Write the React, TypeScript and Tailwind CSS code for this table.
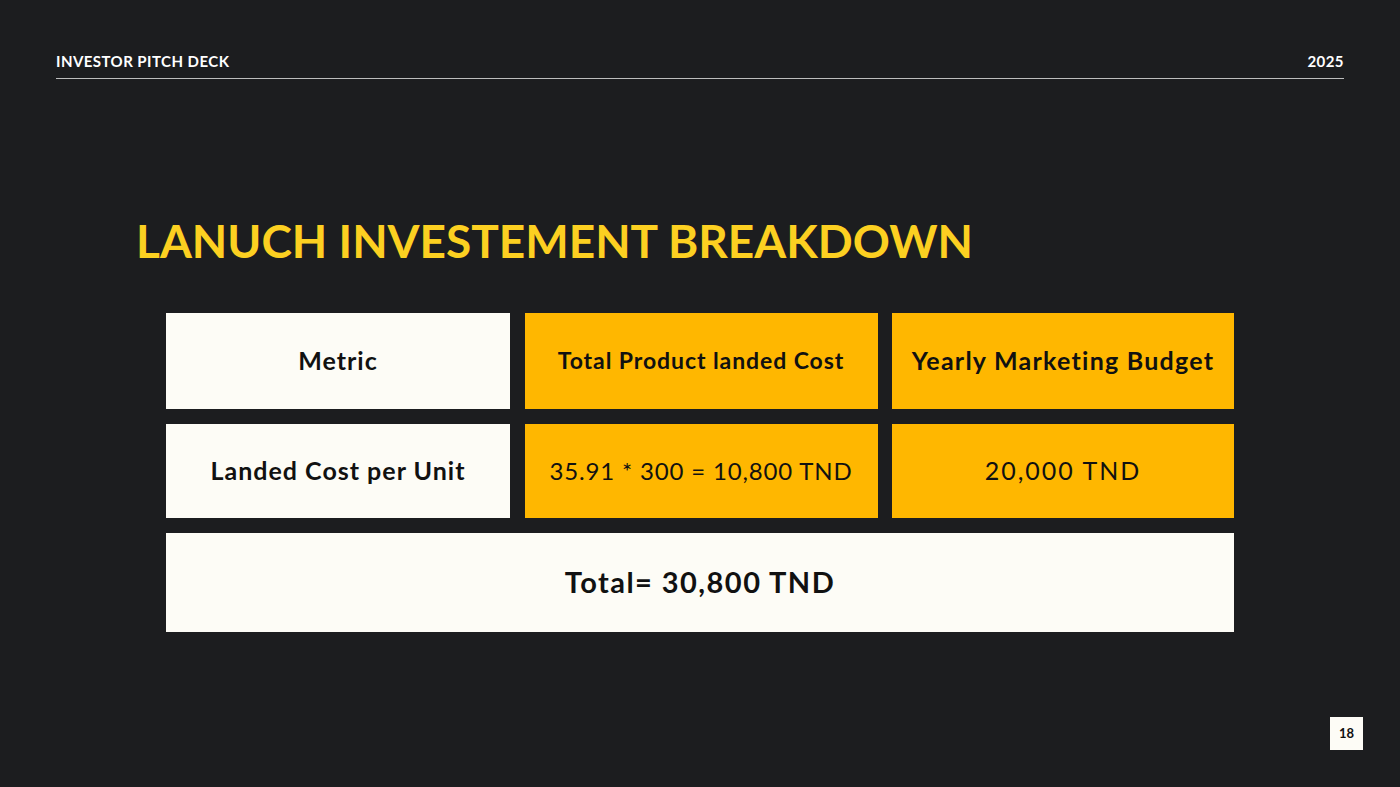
const cell = "flex items-center justify-center text-[#111111]";

export default function App() {
  return (
    <div className="w-[1400px] h-[787px] bg-[#1c1d1f] font-['Lato','Open_Sans',sans-serif] flex flex-col px-[56px] pt-[50px] overflow-hidden">
      <header className="flex items-end justify-between border-b border-[#bdbdbd] pb-[5px] text-white text-[15px] font-bold tracking-[0.03em]">
        <span>INVESTOR PITCH DECK</span>
        <span>2025</span>
      </header>

      <h1 className="mt-[139px] ml-[80px] text-[#fcd021] text-[46px] font-bold leading-none">
        LANUCH INVESTEMENT BREAKDOWN
      </h1>

      <div className="mt-[49px] ml-[110px] w-[1068px] grid grid-cols-[344px_353px_342px] gap-x-[14.5px] gap-y-[15px]">
        <div className={`${cell} h-[96px] bg-[#fdfcf6] text-[25px] font-bold tracking-[0.04em]`}>Metric</div>
        <div className={`${cell} h-[96px] bg-[#ffb700] text-[23px] font-bold tracking-[0.04em]`}>Total Product landed Cost</div>
        <div className={`${cell} h-[96px] bg-[#ffb700] text-[25px] font-bold tracking-[0.05em]`}>Yearly Marketing Budget</div>

        <div className={`${cell} h-[94px] bg-[#fdfcf6] text-[25px] font-bold tracking-[0.04em]`}>Landed Cost per Unit</div>
        <div className={`${cell} h-[94px] bg-[#ffb700] text-[24px] tracking-[0.035em]`}>35.91 * 300 = 10,800 TND</div>
        <div className={`${cell} h-[94px] bg-[#ffb700] text-[25px] tracking-[0.08em]`}>20,000 TND</div>

        <div className={`${cell} col-span-3 h-[99px] bg-[#fdfcf6] text-[29px] font-bold tracking-[0.05em]`}>Total= 30,800 TND</div>
      </div>

      <div className="mt-auto mb-[37px] -mr-[19px] self-end w-[33px] h-[33px] bg-[#fdfcf6] flex items-center justify-center text-[13px] font-bold text-[#111111]">
        18
      </div>
    </div>
  );
}
